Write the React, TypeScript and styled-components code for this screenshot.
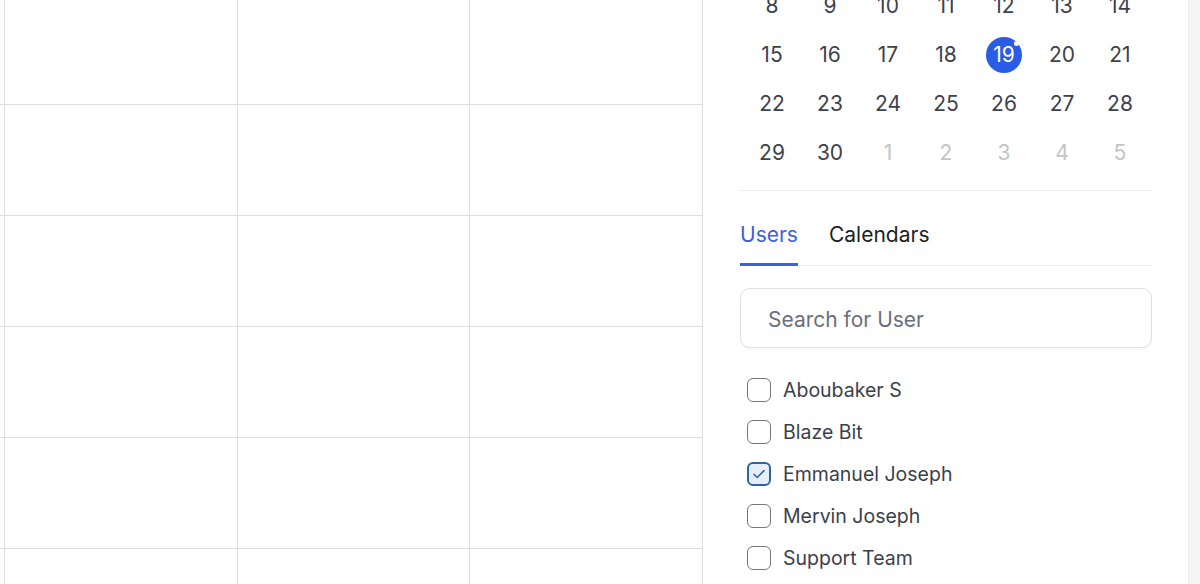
import React, { useState } from "react";
import styled, { createGlobalStyle } from "styled-components";

const GlobalStyle = createGlobalStyle`
  html, body {
    margin: 0;
    padding: 0;
    background: #ffffff;
    overflow: hidden;
  }
  * {
    box-sizing: border-box;
  }
  body {
    font-family: Inter, "Noto Sans", "Liberation Sans", sans-serif;
  }
`;

const weeks: { day: number; muted?: boolean }[][] = [
  [8, 9, 10, 11, 12, 13, 14].map((d) => ({ day: d })),
  [15, 16, 17, 18, 19, 20, 21].map((d) => ({ day: d })),
  [22, 23, 24, 25, 26, 27, 28].map((d) => ({ day: d })),
  [
    { day: 29 },
    { day: 30 },
    { day: 1, muted: true },
    { day: 2, muted: true },
    { day: 3, muted: true },
    { day: 4, muted: true },
    { day: 5, muted: true },
  ],
];

const users = [
  { name: "Aboubaker S", checked: false },
  { name: "Blaze Bit", checked: false },
  { name: "Emmanuel Joseph", checked: true },
  { name: "Mervin Joseph", checked: false },
  { name: "Support Team", checked: false },
];

export default function App() {
  const [tab, setTab] = useState("users");
  const [selected, setSelected] = useState(
    users.filter((u) => u.checked).map((u) => u.name)
  );

  const toggle = (name: string) =>
    setSelected((s) =>
      s.includes(name) ? s.filter((n) => n !== name) : [...s, name]
    );

  return (
    <Page>
      <GlobalStyle />
      <Board>
        {Array.from({ length: 24 }).map((_, i) => (
          <Cell key={i} />
        ))}
      </Board>

      <Sidebar>
        <Month>
          {weeks.map((week, wi) =>
            week.map((d, di) => (
              <Day key={`${wi}-${di}`} $muted={d.muted}>
                {d.day === 19 && !d.muted ? (
                  <Today>
                    19
                    <Dot />
                  </Today>
                ) : (
                  d.day
                )}
              </Day>
            ))
          )}
        </Month>

        <Divider />

        <TabList>
          <Tab $active={tab === "users"} onClick={() => setTab("users")}>
            Users
          </Tab>
          <Tab $active={tab === "calendars"} onClick={() => setTab("calendars")}>
            Calendars
          </Tab>
        </TabList>

        <Search placeholder="Search for User" />

        <UserList>
          {users.map((u) => {
            const on = selected.includes(u.name);
            return (
              <UserRow key={u.name} onClick={() => toggle(u.name)}>
                <Box $checked={on}>
                  {on && (
                    <svg width="16" height="16" viewBox="0 0 16 16" fill="none">
                      <path
                        d="M3 8.3l3.3 3.2L13 4.6"
                        stroke="#2d64a6"
                        strokeWidth="1.6"
                        strokeLinecap="round"
                        strokeLinejoin="round"
                      />
                    </svg>
                  )}
                </Box>
                <UserName>{u.name}</UserName>
              </UserRow>
            );
          })}
        </UserList>
      </Sidebar>

      <Gutter />
    </Page>
  );
}

const Page = styled.div`
  display: flex;
  width: 1200px;
  height: 584px;
  overflow: hidden;
  background: #ffffff;
`;

const Board = styled.div`
  flex: 0 0 703px;
  display: grid;
  grid-template-columns: 5px repeat(3, 1fr);
  grid-template-rows: 105px repeat(5, 111px);
  overflow: hidden;
`;

const Cell = styled.div`
  border-right: 1px solid #dedede;
  border-bottom: 1px solid #dedede;
`;

const Sidebar = styled.div`
  flex: 0 0 485px;
  padding: 0 36px 0 37px;
  display: flex;
  flex-direction: column;
  overflow: hidden;
`;

const Month = styled.div`
  margin-top: -19px;
  display: grid;
  grid-template-columns: repeat(7, 58px);
  grid-auto-rows: 49px;
  justify-content: center;
`;

const Day = styled.div<{ $muted?: boolean }>`
  display: flex;
  align-items: center;
  justify-content: center;
  font-size: 21px;
  color: ${(p) => (p.$muted ? "#c2c4c8" : "#3d424d")};
`;

const Today = styled.span`
  position: relative;
  width: 36px;
  height: 36px;
  border-radius: 50%;
  background: #2b5ce6;
  color: #ffffff;
  display: flex;
  align-items: center;
  justify-content: center;
`;

const Dot = styled.span`
  position: absolute;
  top: 4px;
  right: 3px;
  width: 5px;
  height: 5px;
  border-radius: 50%;
  background: #ffffff;
`;

const Divider = styled.div`
  margin-top: 13px;
  height: 1px;
  background: #ececec;
`;

const TabList = styled.div`
  margin-top: 31px;
  display: flex;
  gap: 31px;
  border-bottom: 1px solid #ececec;
`;

const Tab = styled.button<{ $active?: boolean }>`
  all: unset;
  cursor: pointer;
  font-family: inherit;
  font-size: 21px;
  line-height: 26px;
  padding-bottom: 15px;
  margin-bottom: -1px;
  color: ${(p) => (p.$active ? "#3b62d8" : "#1d1f24")};
  border-bottom: 3px solid ${(p) => (p.$active ? "#3b62d8" : "transparent")};
`;

const Search = styled.input`
  margin-top: 22px;
  height: 60px;
  width: 100%;
  border: 1px solid #dfe0e3;
  border-radius: 10px;
  padding: 2px 27px 0;
  font-family: inherit;
  font-size: 21px;
  color: #1d1f24;
  outline: none;
  box-shadow: 0 1px 2px rgba(16, 24, 40, 0.05);
  &::placeholder {
    color: #6b6f7b;
  }
`;

const UserList = styled.div`
  margin-top: 21px;
  display: flex;
  flex-direction: column;
`;

const UserRow = styled.label`
  height: 42px;
  display: flex;
  align-items: center;
  gap: 12px;
  padding-left: 7px;
  cursor: pointer;
`;

const Box = styled.span<{ $checked?: boolean }>`
  width: 24px;
  height: 24px;
  border-radius: 6px;
  border: ${(p) => (p.$checked ? "2px solid #2d64a6" : "1.5px solid #75777d")};
  background: ${(p) => (p.$checked ? "#e7eef8" : "#ffffff")};
  display: flex;
  align-items: center;
  justify-content: center;
`;

const UserName = styled.span`
  font-size: 19.5px;
  color: #3a3f4b;
`;

const Gutter = styled.div`
  flex: 1;
  background: #f3f5f7;
  border-left: 1px solid #eceef1;
`;
